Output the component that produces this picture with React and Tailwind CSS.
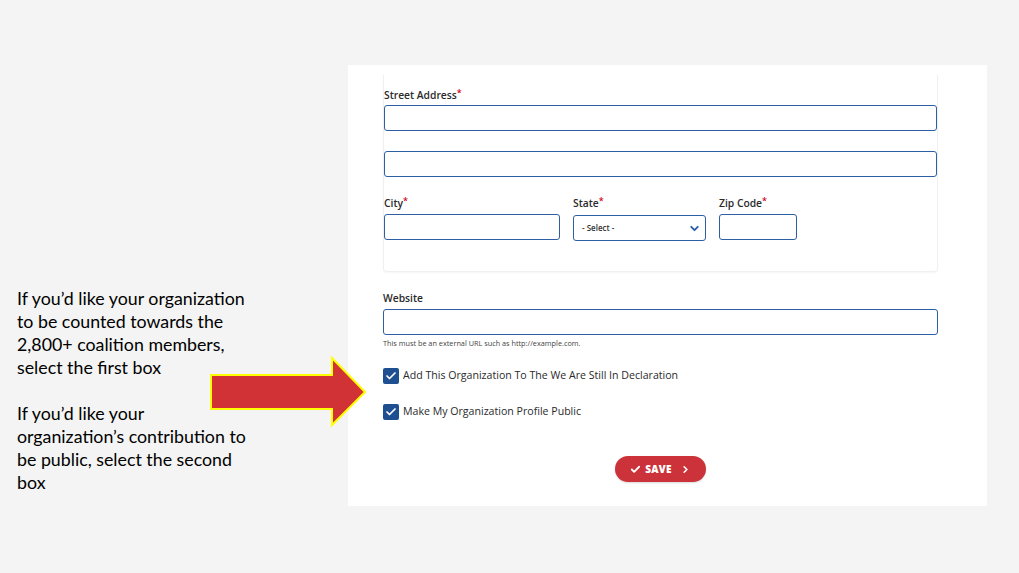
import React from "react";
import { Check, ChevronDown, ChevronRight } from "lucide-react";

const formFont = { fontFamily: '"Open Sans", "Liberation Sans", sans-serif' };

function Label({ children, required }) {
  return (
    <div className="text-[10.3px] leading-[14px] font-semibold text-[#2a2a2a]" style={formFont}>
      {children}
      {required && <span className="text-[#d0021b] text-[9px] align-top relative -top-[2px]">*</span>}
    </div>
  );
}

function Input({ className = "" }) {
  return (
    <div className={"h-[26px] rounded-[3px] border-[1.5px] border-[#2d5fa5] bg-white " + className}></div>
  );
}

function CheckRow({ children }) {
  return (
    <div className="flex items-center gap-[4px]">
      <div className="w-[16px] h-[16px] rounded-[2px] bg-[#1d4f91] flex items-center justify-center">
        <Check size={12} strokeWidth={3.5} color="#ffffff" />
      </div>
      <span className="text-[10.6px] text-[#2a2a2a] font-medium" style={formFont}>
        {children}
      </span>
    </div>
  );
}

export default function App() {
  return (
    <div className="relative w-[1019px] h-[573px] bg-[#f4f4f4] flex overflow-hidden">
      <div className="w-[348px] shrink-0 pl-[17px] pt-[287px]">
        <p
          className="text-[17.8px] leading-[23px] text-black"
          style={{ fontFamily: 'Lato, "Open Sans", sans-serif' }}
        >
          If you’d like your organization
          <br />
          to be counted towards the
          <br />
          2,800+ coalition members,
          <br />
          select the first box
          <br />
          <br />
          If you’d like your
          <br />
          organization’s contribution to
          <br />
          be public, select the second
          <br />
          box
        </p>
      </div>

      <div className="mt-[65px] w-[639px] h-[441px] bg-white pl-[35px] pr-[49px] pt-[10px] flex flex-col">
        <div className="border border-t-0 border-[#f0f0f0] rounded-b-[4px] shadow-[0_1px_2px_rgba(0,0,0,0.04)] pt-[13px] pb-[30px]">
          <Label required>Street Address</Label>
          <Input className="mt-[3px]" />
          <Input className="mt-[20px]" />
          <div className="flex gap-[13px] mt-[19px]">
            <div className="w-[176px]">
              <Label required>City</Label>
              <Input className="mt-[4px]" />
            </div>
            <div className="w-[133px]">
              <Label required>State</Label>
              <div className="mt-[5px] h-[26px] rounded-[3px] border-[1.5px] border-[#2d5fa5] bg-white flex items-center justify-between pl-[8px] pr-[4px]">
                <span className="text-[8px] font-semibold text-[#333]" style={formFont}>
                  - Select -
                </span>
                <ChevronDown size={13} strokeWidth={3.5} color="#2d5fa5" />
              </div>
            </div>
            <div className="w-[78px]">
              <Label required>Zip Code</Label>
              <Input className="mt-[4px]" />
            </div>
          </div>
        </div>

        <div className="mt-[19px]">
          <Label>Website</Label>
          <Input className="mt-[4px]" />
          <div className="mt-[3px] text-[7.3px] leading-[10px] text-[#444]" style={formFont}>
            This must be an external URL such as http://example.com.
          </div>
        </div>

        <div className="mt-[20px] flex flex-col gap-[20px]">
          <CheckRow>Add This Organization To The We Are Still In Declaration</CheckRow>
          <CheckRow>Make My Organization Profile Public</CheckRow>
        </div>

        <div className="mt-[36px] flex justify-center">
          <div className="w-[91px] h-[26px] rounded-full bg-[#cc3239] flex items-center justify-center gap-[4px] shadow-[0_1px_2px_rgba(0,0,0,0.15)]">
            <Check size={11} strokeWidth={4} color="#ffffff" />
            <span className="text-[10px] font-extrabold text-white tracking-[0.2px]" style={formFont}>
              SAVE
            </span>
            <ChevronRight size={11} strokeWidth={3.5} color="#ffffff" className="ml-[4px]" />
          </div>
        </div>
      </div>

      <svg
        className="absolute left-[205px] top-[352px]"
        width="170"
        height="80"
        viewBox="205 352 170 80"
      >
        <polygon
          points="211,375 332,375 332,358 365,392 332,425 332,409 211,409"
          fill="#d03236"
          stroke="#ffff00"
          strokeWidth="2"
          strokeLinejoin="miter"
        />
      </svg>
    </div>
  );
}
